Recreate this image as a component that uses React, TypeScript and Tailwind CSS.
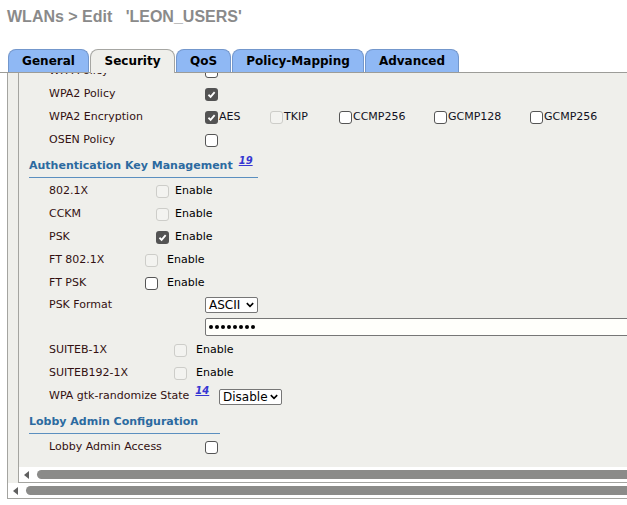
import type { ReactNode } from "react";

type BoxState = "on" | "off" | "dis";

function Box({ state }: { state: BoxState }) {
  if (state === "on") {
    return (
      <span className="flex h-[13px] w-[13px] shrink-0 items-center justify-center rounded-[3px] bg-[#535353]">
        <svg viewBox="0 0 10 10" className="h-[9px] w-[9px]">
          <path d="M1.6 5.3 L4 7.6 L8.5 2.3" fill="none" stroke="#fff" strokeWidth="2" />
        </svg>
      </span>
    );
  }
  if (state === "dis") {
    return <span className="h-[13px] w-[13px] shrink-0 rounded-[3px] border border-[#cdcdc9] bg-[#f3f3f0]" />;
  }
  return <span className="h-[13px] w-[13px] shrink-0 rounded-[3px] border border-[#555] bg-white" />;
}

function Row({ label, labelW, h = "h-[23px]", children }: { label: ReactNode; labelW: string; h?: string; children?: ReactNode }) {
  return (
    <div className={`flex items-center pl-[20px] pt-[3px] ${h}`}>
      <span className={`shrink-0 text-[11px] text-[#331111] ${labelW}`}>{label}</span>
      {children}
    </div>
  );
}

function Sup({ n }: { n: string }) {
  return (
    <sup className="ml-[6px] text-[10px] font-bold italic text-[#3636d2] underline">{n}</sup>
  );
}

function Heading({ text, w, pt, note }: { text: string; w: string; pt: string; note?: string }) {
  return (
    <div className={`border-b border-[#5b8fbf] pb-[4px] ${w} ${pt}`}>
      <div className="flex h-[14px] items-center text-[11px] font-bold text-[#2c6aa0]">
        {text}
        {note && <Sup n={note} />}
      </div>
    </div>
  );
}

function Select({ value, w }: { value: string; w: string }) {
  return (
    <div className={`flex h-[16px] items-center justify-between rounded-[2px] border border-[#767676] bg-white pl-[3px] pr-[3px] text-[12px] text-black ${w}`}>
      <span>{value}</span>
      <svg viewBox="0 0 10 7" className="h-[6px] w-[8px] shrink-0">
        <path d="M1 1.2 L5 5.2 L9 1.2" fill="none" stroke="#000" strokeWidth="2" />
      </svg>
    </div>
  );
}

function Scroll({ pl }: { pl: string }) {
  return (
    <div className={`flex h-[15px] items-center bg-white ${pl}`}>
      <span className="h-0 w-0 border-y-[4px] border-r-[5px] border-y-transparent border-r-[#606060]" />
      <div className="ml-[8px] h-[9px] flex-1 rounded-l-full bg-[#8b8b89]" />
    </div>
  );
}

const tabs = [
  { name: "General", w: "w-[81px]" },
  { name: "Security", w: "w-[85px]", active: true },
  { name: "QoS", w: "w-[55px]" },
  { name: "Policy-Mapping", w: "w-[132px]" },
  { name: "Advanced", w: "w-[94px]" },
];

const enc: { name: string; state: BoxState; w: string }[] = [
  { name: "AES", state: "on", w: "w-[65px]" },
  { name: "TKIP", state: "dis", w: "w-[69px]" },
  { name: "CCMP256", state: "off", w: "w-[95px]" },
  { name: "GCMP128", state: "off", w: "w-[96px]" },
  { name: "GCMP256", state: "off", w: "w-[90px]" },
];

export default function App() {
  return (
    <div className="h-[505px] w-[627px] overflow-hidden bg-white font-['DejaVu_Sans',Verdana,sans-serif]">
      {/* Title */}
      <div className="h-[49px] pl-[7px] pt-[7px] font-['Liberation_Sans',Arial,sans-serif] text-[16px] font-bold leading-[20px] text-[#8a8a8a]">
        WLANs &gt; Edit&nbsp;&nbsp;&nbsp;'LEON_USERS'
      </div>

      {/* Tabs */}
      <div className="flex h-[24px] w-[680px] items-end gap-[1px] border-b border-[#9c9c98] pl-[8px]">
        {tabs.map((t) =>
          t.active ? (
            <div
              key={t.name}
              className={`-mb-px flex h-[24px] items-center justify-center rounded-t-[8px] border border-b-0 border-[#a6a6a2] bg-[#efefeb] pb-px text-[12px] font-bold text-black ${t.w}`}
            >
              {t.name}
            </div>
          ) : (
            <div
              key={t.name}
              className={`flex h-[23px] items-center justify-center rounded-t-[8px] border border-b-0 border-[#7397cc] bg-[#8fb8f4] text-[12px] font-bold text-black ${t.w}`}
            >
              {t.name}
            </div>
          )
        )}
      </div>

      {/* Frame */}
      <div className="ml-[7px] w-[680px] border-b border-l border-[#a4a4a0] bg-[#efefeb]">
        <div className="pl-[10px]">
          <div className="flex h-[410px] flex-col border-b border-l border-[#a4a4a0]">
            <div className="flex-1 overflow-hidden bg-[#efefeb] pl-[10px]">
              <div className="-mt-[15px]">
                <Row label="WPA Policy" labelW="w-[156px]">
                  <Box state="off" />
                </Row>
                <Row label="WPA2 Policy" labelW="w-[156px]">
                  <Box state="on" />
                </Row>
                <Row label="WPA2 Encryption" labelW="w-[156px]">
                  {enc.map((e) => (
                    <div key={e.name} className={`flex shrink-0 items-center text-[11px] text-[#111122] ${e.w}`}>
                      <Box state={e.state} />
                      <span className="ml-px">{e.name}</span>
                    </div>
                  ))}
                </Row>
                <Row label="OSEN Policy" labelW="w-[156px]">
                  <Box state="off" />
                </Row>

                <Heading text="Authentication Key Management" note="19" w="w-[229px]" pt="pt-[9px]" />

                <Row label="802.1X" labelW="w-[107px]">
                  <Box state="dis" />
                  <span className="ml-[6px] text-[11px] text-black">Enable</span>
                </Row>
                <Row label="CCKM" labelW="w-[107px]">
                  <Box state="dis" />
                  <span className="ml-[6px] text-[11px] text-black">Enable</span>
                </Row>
                <Row label="PSK" labelW="w-[107px]">
                  <Box state="on" />
                  <span className="ml-[6px] text-[11px] text-black">Enable</span>
                </Row>
                <Row label="FT 802.1X" labelW="w-[96px]">
                  <Box state="dis" />
                  <span className="ml-[9px] text-[11px] text-black">Enable</span>
                </Row>
                <Row label="FT PSK" labelW="w-[96px]">
                  <Box state="off" />
                  <span className="ml-[9px] text-[11px] text-black">Enable</span>
                </Row>
                <Row label="PSK Format" labelW="w-[156px]" h="h-[21px]">
                  <Select value="ASCII" w="w-[53px]" />
                </Row>
                <Row label="" labelW="w-[156px]">
                  <div className="flex h-[18px] w-[440px] shrink-0 items-center gap-[2px] rounded-[2px] border border-[#767676] bg-[#fffffb] pl-[3px]">
                    {Array.from({ length: 8 }).map((_, i) => (
                      <span key={i} className="h-[4px] w-[4px] rounded-full bg-black" />
                    ))}
                  </div>
                </Row>
                <Row label="SUITEB-1X" labelW="w-[125px]">
                  <Box state="dis" />
                  <span className="ml-[9px] text-[11px] text-black">Enable</span>
                </Row>
                <Row label="SUITEB192-1X" labelW="w-[125px]">
                  <Box state="dis" />
                  <span className="ml-[9px] text-[11px] text-black">Enable</span>
                </Row>
                <Row
                  label={
                    <>
                      WPA gtk-randomize State
                      <Sup n="14" />
                    </>
                  }
                  labelW="w-[170px]"
                  h="h-[24px]"
                >
                  <Select value="Disable" w="w-[63px]" />
                </Row>

                <Heading text="Lobby Admin Configuration" w="w-[191px]" pt="pt-[8px]" />

                <Row label="Lobby Admin Access" labelW="w-[156px]">
                  <Box state="off" />
                </Row>
              </div>
            </div>
            <Scroll pl="pl-[5px]" />
          </div>
        </div>
        <Scroll pl="pl-[5px]" />
      </div>
    </div>
  );
}
